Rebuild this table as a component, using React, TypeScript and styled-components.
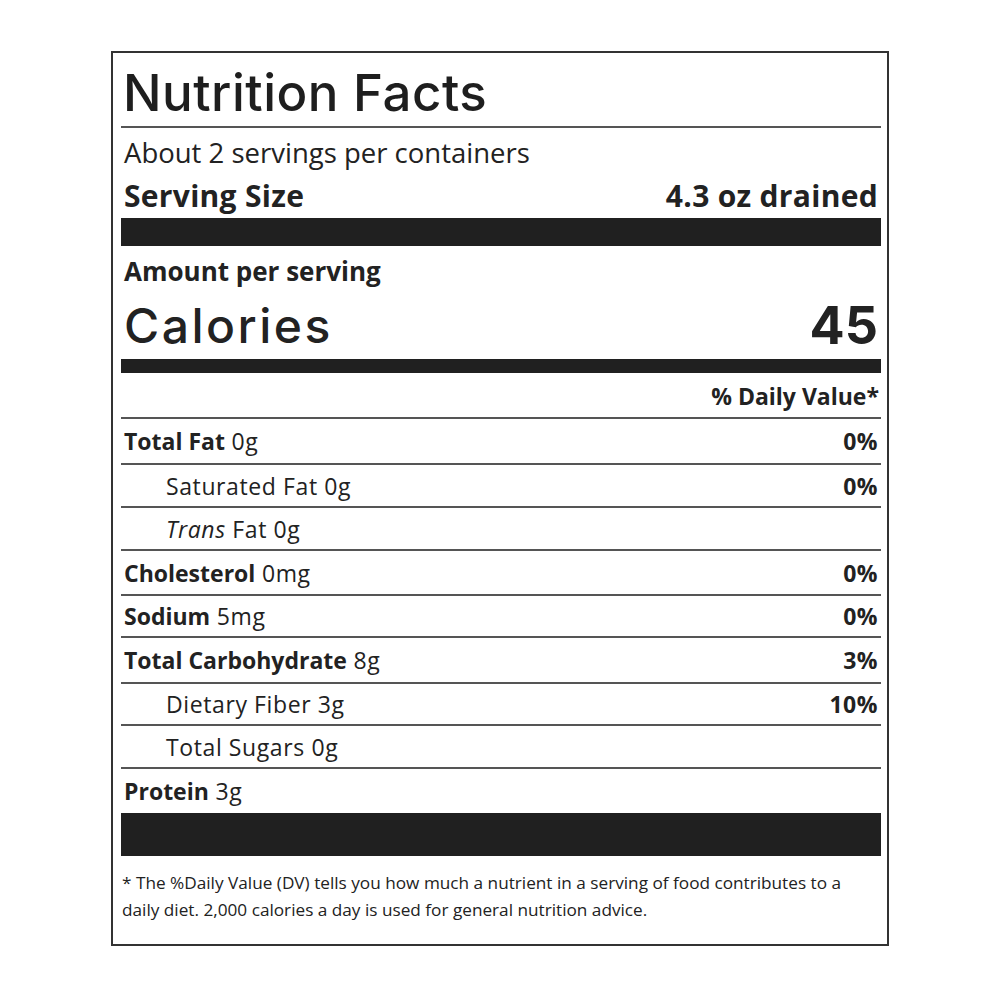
import React from "react";
import styled, { createGlobalStyle } from "styled-components";

const Global = createGlobalStyle`
  html, body { margin: 0; padding: 0; background: #ffffff; }
  body { font-family: "Open Sans", "Noto Sans", sans-serif; color: #222222; }
`;

const Page = styled.div`
  padding: 51px 0 0 111px;
`;

const Label = styled.section`
  box-sizing: border-box;
  width: 778px;
  height: 895px;
  border: 2px solid #333333;
  padding: 0 6px 0 8px;
  display: flex;
  flex-direction: column;
`;

const Title = styled.h1`
  margin: 0;
  height: 75px;
  display: flex;
  align-items: center;
  padding: 6px 0 0 2px;
  box-sizing: border-box;
  font-family: "Inter", sans-serif;
  font-weight: 500;
  font-size: 51px;
  letter-spacing: 0.5px;
  color: #1e1e1e;
  border-bottom: 2px solid #555555;
`;

const Line = styled.div<{ $h: number; $size: number; $weight?: number; $track?: number; $lift?: number }>`
  box-sizing: border-box;
  height: ${(p) => p.$h}px;
  display: flex;
  align-items: center;
  justify-content: space-between;
  padding: 0 3px ${(p) => p.$lift ?? 0}px;
  font-size: ${(p) => p.$size}px;
  font-weight: ${(p) => p.$weight ?? 400};
  letter-spacing: ${(p) => p.$track ?? 0}px;
`;

const Bar = styled.div<{ $h: number }>`
  height: ${(p) => p.$h}px;
  background: #202020;
  flex-shrink: 0;
`;

const Big = styled.span`
  font-family: "Inter", sans-serif;
  font-weight: 500;
  font-size: 48px;
  letter-spacing: 2.5px;
`;

const BigNum = styled.span`
  font-family: "Inter", sans-serif;
  font-weight: 700;
  font-size: 52px;
`;

const DVHead = styled.div`
  height: 46px;
  display: flex;
  align-items: center;
  justify-content: flex-end;
  padding: 2px 2px 0 0;
  box-sizing: border-box;
  font-size: 23px;
  font-weight: 700;
  border-bottom: 2px solid #555555;
`;

const Row = styled.div<{ $h: number; $indent?: boolean; $last?: boolean }>`
  box-sizing: border-box;
  height: ${(p) => p.$h}px;
  display: flex;
  align-items: center;
  justify-content: space-between;
  padding: 0 3px 0 ${(p) => (p.$indent ? 45 : 3)}px;
  font-size: 23px;
  border-bottom: ${(p) => (p.$last ? "none" : "2px solid #555555")};
`;

const Name = styled.span`
  font-weight: 400;
  letter-spacing: 0.6px;
  b { font-weight: 700; letter-spacing: 0; }
  i { font-style: italic; }
`;

const Pct = styled.span`
  font-weight: 700;
  letter-spacing: 0.5px;
`;

const Footnote = styled.p`
  margin: 0;
  padding: 13px 0 0 1px;
  font-size: 17.2px;
  line-height: 27px;
  color: #222222;
`;

type Nutrient = { name: React.ReactNode; pct?: string; indent?: boolean; h: number };

const rows: Nutrient[] = [
  { name: <><b>Total Fat</b> 0g</>, pct: "0%", h: 46 },
  { name: <>Saturated Fat 0g</>, pct: "0%", indent: true, h: 43 },
  { name: <><i>Trans</i> Fat 0g</>, indent: true, h: 43 },
  { name: <><b>Cholesterol</b> 0mg</>, pct: "0%", h: 45 },
  { name: <><b>Sodium</b> 5mg</>, pct: "0%", h: 42 },
  { name: <><b>Total Carbohydrate</b> 8g</>, pct: "3%", h: 46 },
  { name: <>Dietary Fiber 3g</>, pct: "10%", indent: true, h: 42 },
  { name: <>Total Sugars 0g</>, indent: true, h: 43 },
];

export default function App() {
  return (
    <>
      <Global />
      <Page>
        <Label>
          <Title>Nutrition Facts</Title>
          <Line $h={48} $size={27.5}>
            <span>About 2 servings per containers</span>
          </Line>
          <Line $h={42} $size={30} $weight={700} $track={0.3} $lift={3}>
            <span>Serving Size</span>
            <span>4.3 oz drained</span>
          </Line>
          <Bar $h={28} />
          <Line $h={50} $size={26} $weight={700}>
            <span>Amount per serving</span>
          </Line>
          <Line $h={63} $size={48} $lift={5}>
            <Big>Calories</Big>
            <BigNum>45</BigNum>
          </Line>
          <Bar $h={14} />
          <DVHead>% Daily Value*</DVHead>
          {rows.map((r, i) => (
            <Row key={i} $h={r.h} $indent={r.indent}>
              <Name>{r.name}</Name>
              {r.pct && <Pct>{r.pct}</Pct>}
            </Row>
          ))}
          <Row $h={44} $last>
            <Name><b>Protein</b> 3g</Name>
          </Row>
          <Bar $h={43} />
          <Footnote>
            * The %Daily Value (DV) tells you how much a nutrient in a serving of food contributes to a
            <br />
            daily diet. 2,000 calories a day is used for general nutrition advice.
          </Footnote>
        </Label>
      </Page>
    </>
  );
}
